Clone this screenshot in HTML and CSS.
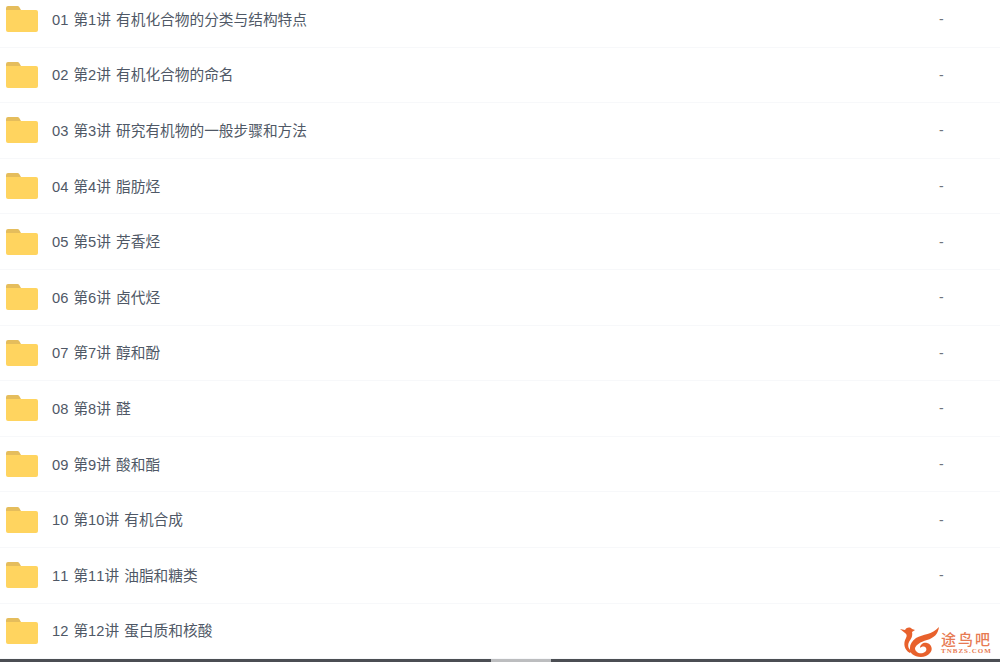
FILE: index.html
```html
<!DOCTYPE html>
<html lang="zh">
<head>
<meta charset="utf-8">
<title>文件列表</title>
<link rel="stylesheet" href="styles.css">
</head>
<body>
<svg class="defs" width="0" height="0" aria-hidden="true">
  <symbol id="folder" viewBox="0 0 32 26">
    <path d="M0 2a2 2 0 0 1 2-2h9.500a2 2 0 0 1 1.600.8L15 4H0z" fill="#e5bd5c"/>
    <path d="M0 4h30a2 2 0 0 1 2 2v18a2 2 0 0 1-2 2H2a2 2 0 0 1-2-2z" fill="#ffd45f"/>
  </symbol>
</svg>
<main class="page">
  <ul class="list">
    <li class="row"><svg class="icon"><use href="#folder"/></svg><span class="name">01 第1讲 有机化合物的分类与结构特点</span><span class="size">-</span></li>
    <li class="row"><svg class="icon"><use href="#folder"/></svg><span class="name">02 第2讲 有机化合物的命名</span><span class="size">-</span></li>
    <li class="row"><svg class="icon"><use href="#folder"/></svg><span class="name">03 第3讲 研究有机物的一般步骤和方法</span><span class="size">-</span></li>
    <li class="row"><svg class="icon"><use href="#folder"/></svg><span class="name">04 第4讲 脂肪烃</span><span class="size">-</span></li>
    <li class="row"><svg class="icon"><use href="#folder"/></svg><span class="name">05 第5讲 芳香烃</span><span class="size">-</span></li>
    <li class="row"><svg class="icon"><use href="#folder"/></svg><span class="name">06 第6讲 卤代烃</span><span class="size">-</span></li>
    <li class="row"><svg class="icon"><use href="#folder"/></svg><span class="name">07 第7讲 醇和酚</span><span class="size">-</span></li>
    <li class="row"><svg class="icon"><use href="#folder"/></svg><span class="name">08 第8讲 醛</span><span class="size">-</span></li>
    <li class="row"><svg class="icon"><use href="#folder"/></svg><span class="name">09 第9讲 酸和酯</span><span class="size">-</span></li>
    <li class="row"><svg class="icon"><use href="#folder"/></svg><span class="name">10 第10讲 有机合成</span><span class="size">-</span></li>
    <li class="row"><svg class="icon"><use href="#folder"/></svg><span class="name">11 第11讲 油脂和糖类</span><span class="size">-</span></li>
    <li class="row"><svg class="icon"><use href="#folder"/></svg><span class="name">12 第12讲 蛋白质和核酸</span><span class="size"></span></li>
  </ul>
  <div class="scrollbar"><div class="track track-left"></div><div class="thumb"></div><div class="track"></div></div>
  <div class="watermark">
    <svg class="logo" viewBox="0 0 41 30" aria-hidden="true">
      <path d="M0 2 L5 3 C7 0 10 0 12 2 L15 3 L12 5 C13 9 11 12 9 15 C7 19 9 23 12 24 L10 26 C4 23 3 16 6 11 C7 9 7 7 5 6 Z" fill="#e8612c"/>
      <path d="M39 0 C38 7 34 11 27 13 C20 15 16 18 15 21 C15 25 19 27 23 26 C26 25 27 23 26 21 C25 19 22 19 20 21 C20 17 24 15 27 16 C32 17 33 23 30 26 C26 31 17 31 12 27 C8 22 10 15 16 11 C23 7 32 8 39 0 Z" fill="#e8612c"/>
    </svg>
    <div class="brand">
      <span class="brand-cn">途鸟吧</span>
      <span class="brand-en">TNBZS.COM</span>
    </div>
  </div>
</main>
</body>
</html>
```
FILE: styles.css
```css
* { box-sizing: border-box; }
html, body { margin: 0; height: 100%; background: #fff; overflow: hidden; }
.defs { display: block; height: 0; }
.page {
  position: relative;
  display: flex;
  flex-direction: column;
  width: 1000px;
  height: 662px;
  overflow: hidden;
  font-family: "Liberation Sans", "Noto Sans CJK SC", sans-serif;
  font-kerning: none;
  color: #4f5866;
}
.list {
  flex: 1;
  min-height: 0;
  margin: -8px 0 0;
  padding: 0;
  list-style: none;
}
.row {
  display: flex;
  align-items: center;
  height: 55.600px;
  padding-left: 6px;
  border-bottom: 1px solid #f7f8fa;
}
.icon { flex: none; width: 32px; height: 26px; margin-right: 14px; }
.name { flex: 1; margin-bottom: 2px; font-size: 14.700px; word-spacing: 1px; white-space: nowrap; }
.size { flex: none; width: 61px; font-size: 14px; color: #6f747b; }
.scrollbar { flex: none; display: flex; height: 3px; }
.track { flex: 1; background: #4b4e53; }
.track-left { flex: none; width: 491px; }
.thumb { flex: none; width: 60px; background: #bcbdbf; }
.watermark {
  position: absolute;
  right: 10px;
  bottom: 5px;
  display: flex;
  align-items: flex-end;
  height: 30px;
}
.logo { flex: none; width: 41px; height: 30px; }
.brand { flex: none; width: 49px; display: flex; flex-direction: column; align-items: flex-start; color: #e77a52; line-height: 1; padding-bottom: 2px; white-space: nowrap; }
.brand-cn { font-size: 15px; letter-spacing: 2px; font-weight: 500; }
.brand-en { font-family: "Liberation Serif", serif; font-size: 7px; font-weight: 700; letter-spacing: 1px; margin-top: 1px; }
```
